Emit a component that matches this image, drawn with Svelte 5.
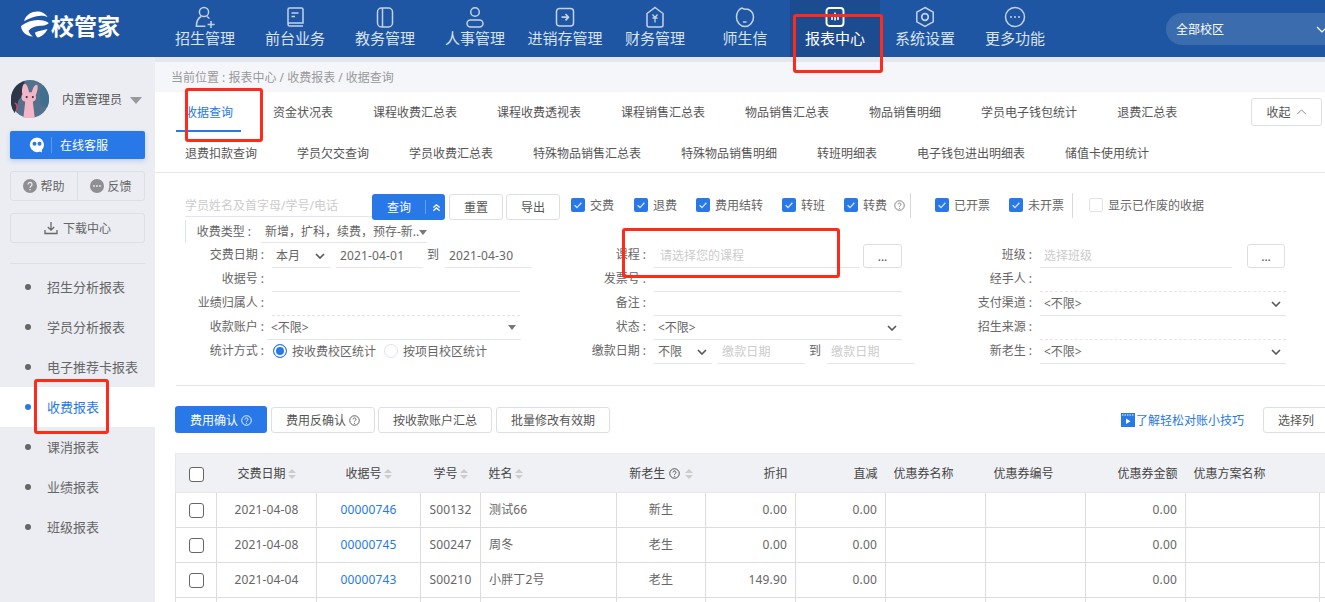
<script>
	const navItems = [
		{ label: '招生管理', icon: 'person' },
		{ label: '前台业务', icon: 'book' },
		{ label: '教务管理', icon: 'panel' },
		{ label: '人事管理', icon: 'user' },
		{ label: '进销存管理', icon: 'enter' },
		{ label: '财务管理', icon: 'money' },
		{ label: '师生信', icon: 'chat' },
		{ label: '报表中心', icon: 'report', active: true },
		{ label: '系统设置', icon: 'gear' },
		{ label: '更多功能', icon: 'more' }
	];

	const sideMenu = ['招生分析报表', '学员分析报表', '电子推荐卡报表', '收费报表', '课消报表', '业绩报表', '班级报表'];

	const tabs = [
		'收据查询', '资金状况表', '课程收费汇总表', '课程收费透视表', '课程销售汇总表', '物品销售汇总表', '物品销售明细', '学员电子钱包统计', '退费汇总表',
		'退费扣款查询', '学员欠交查询', '学员收费汇总表', '特殊物品销售汇总表', '特殊物品销售明细', '转班明细表', '电子钱包进出明细表', '储值卡使用统计'
	];

	const columns = [
		{ label: '交费日期', width: 100, align: 'center', sort: true },
		{ label: '收据号', width: 104, align: 'center', sort: true },
		{ label: '学号', width: 60, align: 'center', sort: true },
		{ label: '姓名', width: 136, align: 'left', sort: true },
		{ label: '新老生', width: 89, align: 'center', sort: true, help: true },
		{ label: '折扣', width: 90, align: 'right' },
		{ label: '直减', width: 90, align: 'right' },
		{ label: '优惠券名称', width: 100, align: 'left' },
		{ label: '优惠券编号', width: 100, align: 'left' },
		{ label: '优惠券金额', width: 100, align: 'right' },
		{ label: '优惠方案名称', width: 134, align: 'left' },
		{ label: '', width: 60, align: 'left' }
	];

	const rows = [
		['2021-04-08', '00000746', 'S00132', '测试66', '新生', '0.00', '0.00', '', '', '0.00', '', ''],
		['2021-04-08', '00000745', 'S00247', '周冬', '老生', '0.00', '0.00', '', '', '0.00', '', ''],
		['2021-04-04', '00000743', 'S00210', '小胖丁2号', '老生', '149.90', '0.00', '', '', '0.00', '', ''],
		['', '', '', '', '', '', '', '', '', '', '', '']
	];
</script>

{#snippet help()}
	<svg class="help" viewBox="0 0 12 12" width="11" height="11">
		<circle cx="6" cy="6" r="5.2" fill="none" stroke="currentColor" />
		<path d="M4.4 4.8a1.6 1.6 0 1 1 2.4 1.4c-.6.3-.8.6-.8 1.1" fill="none" stroke="currentColor" />
		<circle cx="6" cy="9" r=".6" fill="currentColor" />
	</svg>
{/snippet}

{#snippet check(label, on = true)}
	<span class="check">
		<span class="box" class:on>
			{#if on}
				<svg viewBox="0 0 14 14" width="14" height="14"><path d="M3.6 7.2l2.4 2.4 4.4-4.8" fill="none" stroke="#cfe0fa" stroke-width="1.4" /></svg>
			{/if}
		</span>
		<span>{label}</span>
	</span>
{/snippet}

{#snippet chevron()}
	<svg class="chev" viewBox="0 0 10 6" width="10" height="6"><path d="M1 1l4 4 4-4" fill="none" stroke="#555" stroke-width="1.6" /></svg>
{/snippet}

{#snippet navIcon(name)}
	<svg viewBox="0 0 24 24" width="24" height="24" fill="none" stroke={name === 'report' ? '#fff' : '#c3d2e8'} stroke-width="1.5">
		{#if name === 'person'}
			<circle cx="11" cy="7" r="4.6" />
			<path d="M8 11.5c-2.6 1.6-4.6 5-4.6 9.7h9" />
			<path d="M14 11.6c1 .5 1.8 1.2 2.4 2M18 16v7M14.6 19.5h7" />
		{:else if name === 'book'}
			<path d="M5 19V4.500a1.500 1.500 0 0 1 1.500-1.500h12a1.500 1.500 0 0 1 1.500 1.500V18H6.500a1.500 1.500 0 0 0 0 3H20" />
			<path d="M8.500 8h7M8.500 11.500h3.500" />
		{:else if name === 'panel'}
			<rect x="4.500" y="3" width="15" height="19" rx="4" />
			<path d="M9.500 3v19" />
		{:else if name === 'user'}
			<circle cx="12" cy="7" r="4.300" />
			<rect x="4" y="15" width="16" height="7" rx="3.500" />
		{:else if name === 'enter'}
			<rect x="3.500" y="3.500" width="17" height="17.500" rx="3" />
			<path d="M8.500 12.200h6.500M12.500 9l3 3.200-3 3.200" stroke-width="1.700" />
		{:else if name === 'money'}
			<path d="M12 2.500l8 6v11.500a2 2 0 0 1-2 2H6a2 2 0 0 1-2-2V8.500z" />
			<path d="M9.500 9.500l2.500 3 2.500-3M9.500 13h5M12 12.500v5" stroke-width="1.300" />
		{:else if name === 'chat'}
			<path d="M15 4.200c3.400 1.400 5.500 4.400 5.500 8 0 5-3.800 9.300-8.500 9.300s-8.500-4.300-8.500-9.300c0-4.600 2.600-8.200 5.500-9.200 1.400 1.200 3.800 1.500 6 1.200z" />
			<path d="M10 17h3.500" />
		{:else if name === 'report'}
			<rect x="3.500" y="3" width="17" height="18" rx="3" stroke-width="1.900" />
			<path d="M9 10v5M12 7.500v8M15 10v5" stroke-width="1.600" />
		{:else if name === 'gear'}
			<path d="M12 2.500l8.200 4.700v9.600L12 21.500l-8.200-4.700V7.200z" />
			<circle cx="12" cy="12" r="3.300" stroke-width="1.700" />
		{:else}
			<circle cx="12" cy="12" r="9.500" />
			<circle cx="8" cy="12" r="1" fill="#c3d2e8" stroke="none" />
			<circle cx="12" cy="12" r="1" fill="#c3d2e8" stroke="none" />
			<circle cx="16" cy="12" r="1" fill="#c3d2e8" stroke="none" />
		{/if}
	</svg>
{/snippet}

<div class="page">
	<header class="topbar">
		<div class="logo">
			<svg viewBox="0 0 30 28" width="30" height="28">
				<path d="M4 10C6 3.500 12 .5 17 .5c4.500 0 8.500 2 10.500 5.500-3-1.300-7-1.800-11-.8C11.500 6.400 7.500 8.500 4 10z" fill="#fff" />
				<path d="M1 15c5-3.800 11-6 17-6 4.500 0 8.500 1.200 10.800 3-1 1.500-3.500 2.500-7 2.700-5 .2-10 1-13.300 5 .5 2 2 4 4.500 5.800C6 25 1.500 21 1 15z" fill="#fff" />
				<path d="M15 21.500c4-2 9-2.500 12.500-3.500-2 4.500-6 8-10 8.500-1.500-1.500-2.300-3.200-2.500-5z" fill="#fff" />
			</svg>
			<span>校管家</span>
		</div>
		<nav class="nav">
			{#each navItems as item}
				<div class="nav-item" class:active={item.active}>
					{@render navIcon(item.icon)}
					<span>{item.label}</span>
				</div>
			{/each}
		</nav>
		<div class="campus">
			<span>全部校区</span>
			<svg viewBox="0 0 12 7" width="12" height="7"><path d="M1 1l5 5 5-5" fill="none" stroke="#fff" stroke-width="1.200" /></svg>
		</div>
	</header>

	<div class="body">
		<aside class="side">
			<div class="profile">
				<svg class="avatar" viewBox="0 0 40 40" width="38" height="38">
					<circle cx="20" cy="20" r="20" fill="#55708c" />
					<path d="M0 20a20 20 0 0 1 14-19l2 12-8 8-4 14A20 20 0 0 1 0 20z" fill="#2e3748" />
					<path d="M34 6a20 20 0 0 1 4 23l-7-3-1-14z" fill="#3f6f8f" />
					<path d="M14 4c2-1 4 3 5 9h3c1-5 3-8 5-8s1 7-1 11c1 3 0 6-3 7l2 17H13l2-17c-4-1-5-5-3-8-1-4 0-10 2-11z" fill="#f4b6c6" />
					<circle cx="16.500" cy="18" r="1.100" fill="#333" />
					<circle cx="23" cy="18" r="1.100" fill="#333" />
					<path d="M4 24c2 1 3 4 2 8" stroke="#d9455a" stroke-width="1.500" fill="none" />
				</svg>
				<span class="name">内置管理员</span>
				<span class="caret"></span>
			</div>
			<button class="service">
				<svg viewBox="0 0 16 16" width="16" height="16">
					<path d="M8 .5a7.300 7.300 0 1 0 3 14l2 1-.2-2.600A7.300 7.300 0 0 0 8 .5z" fill="#fff" />
					<circle cx="5.500" cy="6.800" r="2" fill="#2878e8" />
					<circle cx="10.500" cy="6.800" r="2" fill="#2878e8" />
				</svg>
				<i></i>
				<span>在线客服</span>
			</button>
			<div class="pair">
				<div>
					<svg viewBox="0 0 14 14" width="14" height="14">
						<circle cx="7" cy="7" r="7" fill="#8e8e93" />
						<path d="M5 5.400a2 2 0 1 1 3.200 1.600c-.8.500-1.200.9-1.200 1.700" fill="none" stroke="#ebedf2" stroke-width="1.300" />
						<circle cx="7" cy="10.800" r=".8" fill="#ebedf2" />
					</svg>
					帮助
				</div>
				<div>
					<svg viewBox="0 0 14 14" width="14" height="14">
						<circle cx="7" cy="7" r="7" fill="#8e8e93" />
						<circle cx="4" cy="7" r=".9" fill="#ebedf2" />
						<circle cx="7" cy="7" r=".9" fill="#ebedf2" />
						<circle cx="10" cy="7" r=".9" fill="#ebedf2" />
					</svg>
					反馈
				</div>
			</div>
			<div class="download">
				<svg viewBox="0 0 14 14" width="14" height="14" fill="none" stroke="#666" stroke-width="1.300">
					<path d="M7 1v8M3.800 6L7 9.200 10.200 6M1 9v3.500h12V9" />
				</svg>
				下载中心
			</div>
			<ul class="menu">
				{#each sideMenu as item, i}
					<li class:current={i === 3}>{item}</li>
				{/each}
			</ul>
		</aside>

		<main class="main">
			<div class="crumbs">当前位置&nbsp;:&nbsp;报表中心 / 收费报表 / 收据查询</div>
			<div class="tabs">
				{#each tabs as tab, i}
					<span class="tab" class:active={i === 0}>{tab}</span>
					{#if i === 8}<i class="break"></i>{/if}
				{/each}
				<button class="btn fold">收起
					<svg viewBox="0 0 12 7" width="11" height="6"><path d="M1 6l5-5 5 5" fill="none" stroke="#777" stroke-width="1" /></svg>
				</button>
			</div>

			<div class="search">
				<span class="keyword">学员姓名及首字母/学号/电话</span>
				<div class="query">
					<span>查询</span>
					<i></i>
					<svg viewBox="0 0 10 10" width="9" height="9"><path d="M1.500 5L5 2l3.500 3M1.500 8.500L5 5.500l3.500 3" fill="none" stroke="#fff" stroke-width="1.500" /></svg>
				</div>
				<button class="btn">重置</button>
				<button class="btn">导出</button>
				<div class="checks">
					{@render check('交费')}
					{@render check('退费')}
					{@render check('费用结转')}
					{@render check('转班')}
					{@render check('转费')}
					<span class="tip">{@render help()}</span>
					<i class="sep"></i>
					{@render check('已开票')}
					{@render check('未开票')}
					<i class="sep narrow"></i>
					{@render check('显示已作废的收据', false)}
				</div>
			</div>

			<div class="form">
				<!-- first row only has the fee type in column one -->
				<div class="row kind">
					<label>收费类型 :</label>
					<div class="field"><span>新增，扩科，续费，预存-新..</span><b class="tri"></b></div>
				</div>
				<div class="row empty"></div>
				<div class="row empty"></div>

				<div class="row">
					<label>交费日期 :</label>
					<div class="dates">
						<div class="field month">本月 {@render chevron()}</div>
						<div class="field day">2021-04-01</div>
						<span class="to">到</span>
						<div class="field day last">2021-04-30</div>
					</div>
				</div>
				<div class="row">
					<label>课程 :</label>
					<div class="field pick"><span class="hint">请选择您的课程</span></div>
					<button class="btn dots">...</button>
				</div>
				<div class="row third">
					<label>班级 :</label>
					<div class="field pick small"><span class="hint">选择班级</span></div>
					<button class="btn dots">...</button>
				</div>

				<div class="row"><label>收据号 :</label><div class="field"></div></div>
				<div class="row"><label>发票号 :</label><div class="field"></div></div>
				<div class="row third"><label>经手人 :</label><div class="field dashed"></div></div>

				<div class="row"><label>业绩归属人 :</label><div class="field dashed"></div></div>
				<div class="row"><label>备注 :</label><div class="field"></div></div>
				<div class="row third"><label>支付渠道 :</label><div class="field">&lt;不限&gt; {@render chevron()}</div></div>

				<div class="row"><label>收款账户 :</label><div class="field wide">&lt;不限&gt; <b class="tri"></b></div></div>
				<div class="row"><label>状态 :</label><div class="field">&lt;不限&gt; {@render chevron()}</div></div>
				<div class="row third"><label>招生来源 :</label><div class="field dashed"></div></div>

				<div class="row">
					<label>统计方式 :</label>
					<div class="radios">
						<span class="radio on"></span><span>按收费校区统计</span>
						<span class="radio"></span><span>按项目校区统计</span>
					</div>
				</div>
				<div class="row">
					<label>缴款日期 :</label>
					<div class="dates">
						<div class="field month">不限 {@render chevron()}</div>
						<div class="field day"><span class="hint">缴款日期</span></div>
						<span class="to">到</span>
						<div class="field day last"><span class="hint">缴款日期</span></div>
					</div>
				</div>
				<div class="row third"><label>新老生 :</label><div class="field">&lt;不限&gt; {@render chevron()}</div></div>
			</div>

			<div class="rule"></div>

			<div class="toolbar">
				<button class="btn primary">费用确认 {@render help()}</button>
				<button class="btn">费用反确认 {@render help()}</button>
				<button class="btn">按收款账户汇总</button>
				<button class="btn">批量修改有效期</button>
				<a class="tips" href="#tips">
					<svg viewBox="0 0 14 14" width="14" height="14">
						<rect x="0" y="0" width="14" height="14" fill="#2878e8" />
						<path d="M1 2h12" stroke="#fff" stroke-width="1" stroke-dasharray="1.500 1" />
						<path d="M5 5.500l4.500 2.700L5 11z" fill="#fff" />
					</svg>
					了解轻松对账小技巧
				</a>
				<button class="btn columns">选择列</button>
			</div>

			<table class="grid">
				<colgroup>
					<col style="width: 41px" />
					{#each columns as col}
						<col style="width: {col.width}px" />
					{/each}
				</colgroup>
				<thead>
					<tr>
						<th class="center"><span class="tick"></span></th>
						{#each columns as col}
							<th class={col.align}>
								{col.label}{#if col.help}&nbsp;{@render help()}&nbsp;{/if}{#if col.sort}<span class="sort"></span>{/if}
							</th>
						{/each}
					</tr>
				</thead>
				<tbody>
					{#each rows as row}
						<tr>
							<td class="center"><span class="tick"></span></td>
							{#each row as value, i}
								<td class={columns[i].align}>
									{#if i === 1}<a href="#receipt">{value}</a>{:else}{value}{/if}
								</td>
							{/each}
						</tr>
					{/each}
				</tbody>
			</table>
		</main>
	</div>

	<!-- red annotations drawn on top of the screenshot -->
	<i class="mark m1"></i>
	<i class="mark m2"></i>
	<i class="mark m3"></i>
	<i class="mark m4"></i>
</div>

<style>
	:global(body) {
		margin: 0;
		overflow: hidden;
		font-family: 'Noto Sans', 'Noto Sans CJK SC', sans-serif;
		font-size: 12px;
		color: #666;
	}

	.page {
		position: relative;
		width: 1325px;
		height: 602px;
		overflow: hidden;
		background: #fff;
	}

	.topbar {
		display: flex;
		height: 57px;
		background: #1f56a3;
		overflow: hidden;
	}

	.logo {
		display: flex;
		align-items: center;
		gap: 1px;
		width: 160px;
		padding: 0 0 8px 20px;
		box-sizing: border-box;
		flex-shrink: 0;
		color: #fff;
		font-size: 23px;
		font-weight: 700;
	}

	.nav {
		display: flex;
		flex-shrink: 0;
	}

	.nav-item {
		display: flex;
		flex-direction: column;
		align-items: center;
		width: 90px;
		padding-top: 5px;
		box-sizing: border-box;
		color: #d8e2f0;
		font-size: 15px;
		line-height: 20px;
		white-space: nowrap;
	}

	.nav-item span {
		margin-top: -1px;
	}

	.nav-item.active {
		background: #1c4b90;
		color: #fff;
	}

	.campus {
		display: flex;
		align-items: center;
		gap: 92px;
		flex-shrink: 0;
		width: 190px;
		height: 32px;
		margin: 13px 0 0 106px;
		padding-left: 10px;
		box-sizing: border-box;
		border-radius: 16px 0 0 16px;
		background: #3a6cae;
		color: #fff;
		font-size: 12px;
	}

	.body {
		display: flex;
		height: 545px;
		background: #e4e7ee;
	}

	.side {
		width: 155px;
		flex-shrink: 0;
		background: #ebedf2;
	}

	.profile {
		display: flex;
		align-items: center;
		height: 74px;
		padding: 10px 0 0 11px;
		box-sizing: border-box;
		color: #555;
	}

	.avatar {
		flex-shrink: 0;
		margin-right: 13px;
	}

	.name {
		white-space: nowrap;
	}

	.caret {
		margin: 2px 0 0 8px;
		border: 6px solid transparent;
		border-top: 7px solid #999;
		border-bottom: 0;
	}

	.service {
		display: flex;
		align-items: center;
		width: 135px;
		height: 28px;
		margin-left: 10px;
		padding: 0 0 0 19px;
		box-sizing: border-box;
		border: 0;
		border-radius: 2px;
		background: #2878e8;
		box-shadow: 0 2px 5px rgba(40, 120, 232, 0.25);
		color: #fff;
		font: inherit;
	}

	.service i {
		width: 1px;
		height: 16px;
		margin: 0 8px 0 6px;
		background: #5b98ee;
	}

	.pair {
		display: flex;
		width: 135px;
		height: 30px;
		margin: 12px 0 0 10px;
		box-sizing: border-box;
		border: 1px solid #dcdfe6;
		border-radius: 3px;
	}

	.pair div {
		display: flex;
		align-items: center;
		justify-content: center;
		gap: 3px;
		flex: 1;
	}

	.pair div + div {
		border-left: 1px solid #dcdfe6;
	}

	.download {
		display: flex;
		align-items: center;
		justify-content: center;
		gap: 5px;
		width: 135px;
		height: 30px;
		margin: 12px 0 0 10px;
		box-sizing: border-box;
		border: 1px solid #dcdfe6;
		border-radius: 3px;
	}

	.menu {
		margin: 20px 10px 0;
		padding: 3px 0 0;
		list-style: none;
		font-size: 13px;
		border-top: 1px solid #dcdfe8;
	}

	.menu li {
		position: relative;
		height: 40px;
		margin: 0 -10px;
		padding-left: 47px;
		line-height: 40px;
		color: #666;
	}

	.menu li::before {
		content: '';
		position: absolute;
		left: 25px;
		top: 17px;
		width: 6px;
		height: 6px;
		border-radius: 50%;
		background: #666;
	}

	.menu li.current {
		background: #fff;
		color: #2878e8;
	}

	.menu li.current::before {
		background: #2878e8;
	}

	.main {
		flex: 1;
		min-width: 0;
		margin-top: 5px;
		overflow: hidden;
		background: #fff;
	}

	.crumbs {
		height: 30px;
		padding-left: 16px;
		background: #f5f6fa;
		color: #999;
		line-height: 32px;
	}

	.tabs {
		position: relative;
		display: flex;
		flex-wrap: wrap;
		align-content: flex-start;
		column-gap: 40px;
		height: 80px;
		padding-left: 30px;
		border-bottom: 1px solid #e6e8ee;
		color: #555;
		line-height: 41px;
	}

	.tab {
		position: relative;
		white-space: nowrap;
	}

	.tab.active {
		color: #2878e8;
	}

	.tab.active::after {
		content: '';
		position: absolute;
		left: -9px;
		bottom: 1px;
		width: 65px;
		height: 2px;
		background: #2878e8;
	}

	.break {
		width: 100%;
		height: 0;
	}

	.btn {
		height: 26px;
		padding: 0;
		box-sizing: border-box;
		border: 1px solid #dcdfe6;
		border-radius: 3px;
		background: #fff;
		color: #555;
		font: inherit;
		white-space: nowrap;
	}

	.fold {
		position: absolute;
		left: 1096px;
		top: 6px;
		display: flex;
		align-items: center;
		justify-content: center;
		gap: 5px;
		width: 71px;
		height: 28px;
	}

	.search {
		display: flex;
		align-items: center;
		height: 26px;
		margin-top: 21px;
		padding-left: 30px;
	}

	.keyword {
		width: 187px;
		height: 22px;
		margin-top: -3px;
		box-sizing: border-box;
		border-bottom: 1px solid #e4e6ec;
		color: #ccc;
		line-height: 22px;
		white-space: nowrap;
	}

	.query {
		display: flex;
		align-items: center;
		width: 73px;
		height: 26px;
		padding-left: 15px;
		box-sizing: border-box;
		border-radius: 3px;
		background: #2878e8;
		color: #fff;
	}

	.query i {
		width: 1px;
		height: 14px;
		margin: 0 6px 0 14px;
		background: #6aa2ef;
	}

	.search .btn {
		width: 54px;
		margin-left: 4px;
	}

	.search .btn + .btn {
		margin-left: 3px;
	}

	.checks {
		display: flex;
		align-items: center;
		gap: 19px;
		margin: -4px 0 0 11px;
	}

	.check {
		display: flex;
		align-items: center;
		gap: 5px;
		white-space: nowrap;
	}

	.check:first-child {
		margin-right: 1px;
	}

	.box {
		width: 14px;
		height: 14px;
		box-sizing: border-box;
		border: 1px solid #e0e3ea;
		border-radius: 2px;
		background: #fff;
	}

	.box.on {
		border: 0;
		background: #2878e8;
	}

	.box svg {
		display: block;
	}

	.tip {
		display: flex;
		margin-left: -12px;
		color: #777;
	}

	.sep {
		width: 1px;
		height: 25px;
		margin: 0 5px 0 -14px;
		background: #d9d9d9;
	}

	.sep.narrow {
		margin: 0 -3px 0 -11px;
	}

	.help {
		vertical-align: -1px;
	}

	.form {
		display: grid;
		grid-template-columns: 382px 386px 1fr;
		grid-auto-rows: 24px;
		padding-left: 21px;
	}

	.row {
		display: flex;
		align-items: stretch;
		position: relative;
	}

	label {
		flex-shrink: 0;
		width: 96px;
		padding-right: 8px;
		box-sizing: border-box;
		color: #666;
		line-height: 22px;
		text-align: right;
		white-space: nowrap;
	}

	.field {
		display: flex;
		align-items: center;
		justify-content: space-between;
		width: 248px;
		box-sizing: border-box;
		border-bottom: 1px solid #e4e6ec;
		padding: 0 5px 0 4px;
		white-space: nowrap;
		line-height: 22px;
	}

	.field.wide {
		width: 254px;
		margin-left: -5px;
	}

	.field.dashed {
		border-bottom: 1px dashed #e4e6ec;
	}

	.third .field {
		width: 246px;
	}

	.kind {
		margin-left: 9px;
		border-left: 1px solid #dfe3ea;
		height: 23px;
	}

	.kind label {
		width: 75px;
		padding-right: 10px;
		line-height: 24px;
	}

	.kind .field {
		width: 166px;
		padding: 2px 0 0 4px;
	}

	.tri {
		flex-shrink: 0;
		border: 4px solid transparent;
		border-top: 5px solid #777;
		border-bottom: 0;
	}

	.hint {
		color: #ccc;
	}

	.dates {
		display: flex;
		align-items: stretch;
	}

	.dates .field {
		width: 58px;
	}

	.dates .field.day {
		width: 87px;
		margin-left: 6px;
		justify-content: flex-start;
		letter-spacing: 0.15px;
	}

	.dates .field.day.last {
		margin-left: 0;
	}

	.to {
		width: 18px;
		margin-left: 4px;
		line-height: 22px;
	}

	.pick {
		width: 206px;
		justify-content: flex-start;
		padding-left: 6px;
	}

	.third .pick.small {
		width: 192px;
		margin-right: 15px;
		padding-left: 4px;
	}

	.pick + .dots {
		width: 39px;
		height: 24px;
		margin-left: 3px;
	}

	.third .pick + .dots {
		margin-left: 0;
		width: 38px;
	}

	.radios {
		display: flex;
		align-items: center;
		height: 22px;
		margin-left: 1px;
		white-space: nowrap;
	}

	.radio {
		width: 14px;
		height: 14px;
		margin-right: 5px;
		box-sizing: border-box;
		border: 1px solid #e0e3ea;
		border-radius: 50%;
		background: #fff;
	}

	.radio.on {
		border: 1px solid #2878e8;
		box-shadow: inset 0 0 0 2px #fff;
		background: #2878e8;
	}

	.radios span:nth-child(2) {
		margin-right: 8px;
	}

	.rule {
		height: 1px;
		margin: 21px 0 0 21px;
		background: #e4e6ec;
	}

	.toolbar {
		display: flex;
		align-items: center;
		height: 27px;
		margin-top: 20px;
		padding-left: 20px;
		gap: 4px;
	}

	.toolbar .btn {
		flex-shrink: 0;
		height: 26px;
		width: 114px;
	}

	.toolbar .btn.primary {
		width: 92px;
		height: 27px;
		border: 0;
		background: #2878e8;
		color: #fff;
	}

	.toolbar .btn:nth-child(2) {
		width: 104px;
		margin-right: -1px;
	}

	.tips {
		display: flex;
		align-items: center;
		gap: 1px;
		flex-shrink: 0;
		margin-left: 507px;
		color: #2878e8;
		text-decoration: none;
		white-space: nowrap;
	}

	.toolbar .btn.columns {
		width: 74px;
		margin-left: 15px;
		padding-right: 8px;
	}

	.grid {
		width: 1204px;
		margin: 20px 0 0 20px;
		table-layout: fixed;
		border-collapse: collapse;
	}

	th {
		height: 38px;
		padding: 0 8px;
		background: #f0f1f5;
		border-top: 1px solid #e6e8ee;
		border-bottom: 1px solid #e6e8ee;
		color: #444;
		font-weight: 400;
		white-space: nowrap;
	}

	th:first-child {
		border-left: 1px solid #e6e8ee;
	}

	td {
		height: 32px;
		padding: 0 8px 2px;
		border: 1px solid #dddddd;
		color: #666;
		letter-spacing: 0.15px;
		white-space: nowrap;
	}

	td.center {
		padding: 0 0 2px;
	}

	.center {
		padding: 0;
		text-align: center;
	}

	.left {
		text-align: left;
	}

	.right {
		text-align: right;
	}

	td a {
		color: #2878e8;
		text-decoration: none;
	}

	.tick {
		display: inline-block;
		width: 13px;
		height: 13px;
		vertical-align: middle;
		border: 1px solid #666;
		border-radius: 3px;
		background: #fff;
	}

	.sort {
		position: relative;
		display: inline-block;
		width: 8px;
		height: 10px;
		margin-left: 2px;
		vertical-align: -1px;
	}

	.sort::before,
	.sort::after {
		content: '';
		position: absolute;
		left: 0;
		border: 4px solid transparent;
	}

	.sort::before {
		top: 0;
		border-top: 0;
		border-bottom: 4px solid #ccc;
	}

	.sort::after {
		bottom: 0;
		border-bottom: 0;
		border-top: 4px solid #ccc;
	}

	.mark {
		position: absolute;
		box-sizing: border-box;
		border: 3px solid #ff2a1a;
		border-radius: 3px;
		pointer-events: none;
	}

	.m1 {
		left: 185px;
		top: 88px;
		width: 78px;
		height: 54px;
	}

	.m2 {
		left: 793px;
		top: 14px;
		width: 90px;
		height: 59px;
	}

	.m3 {
		left: 622px;
		top: 228px;
		width: 218px;
		height: 50px;
	}

	.m4 {
		left: 34px;
		top: 379px;
		width: 75px;
		height: 55px;
	}
</style>
